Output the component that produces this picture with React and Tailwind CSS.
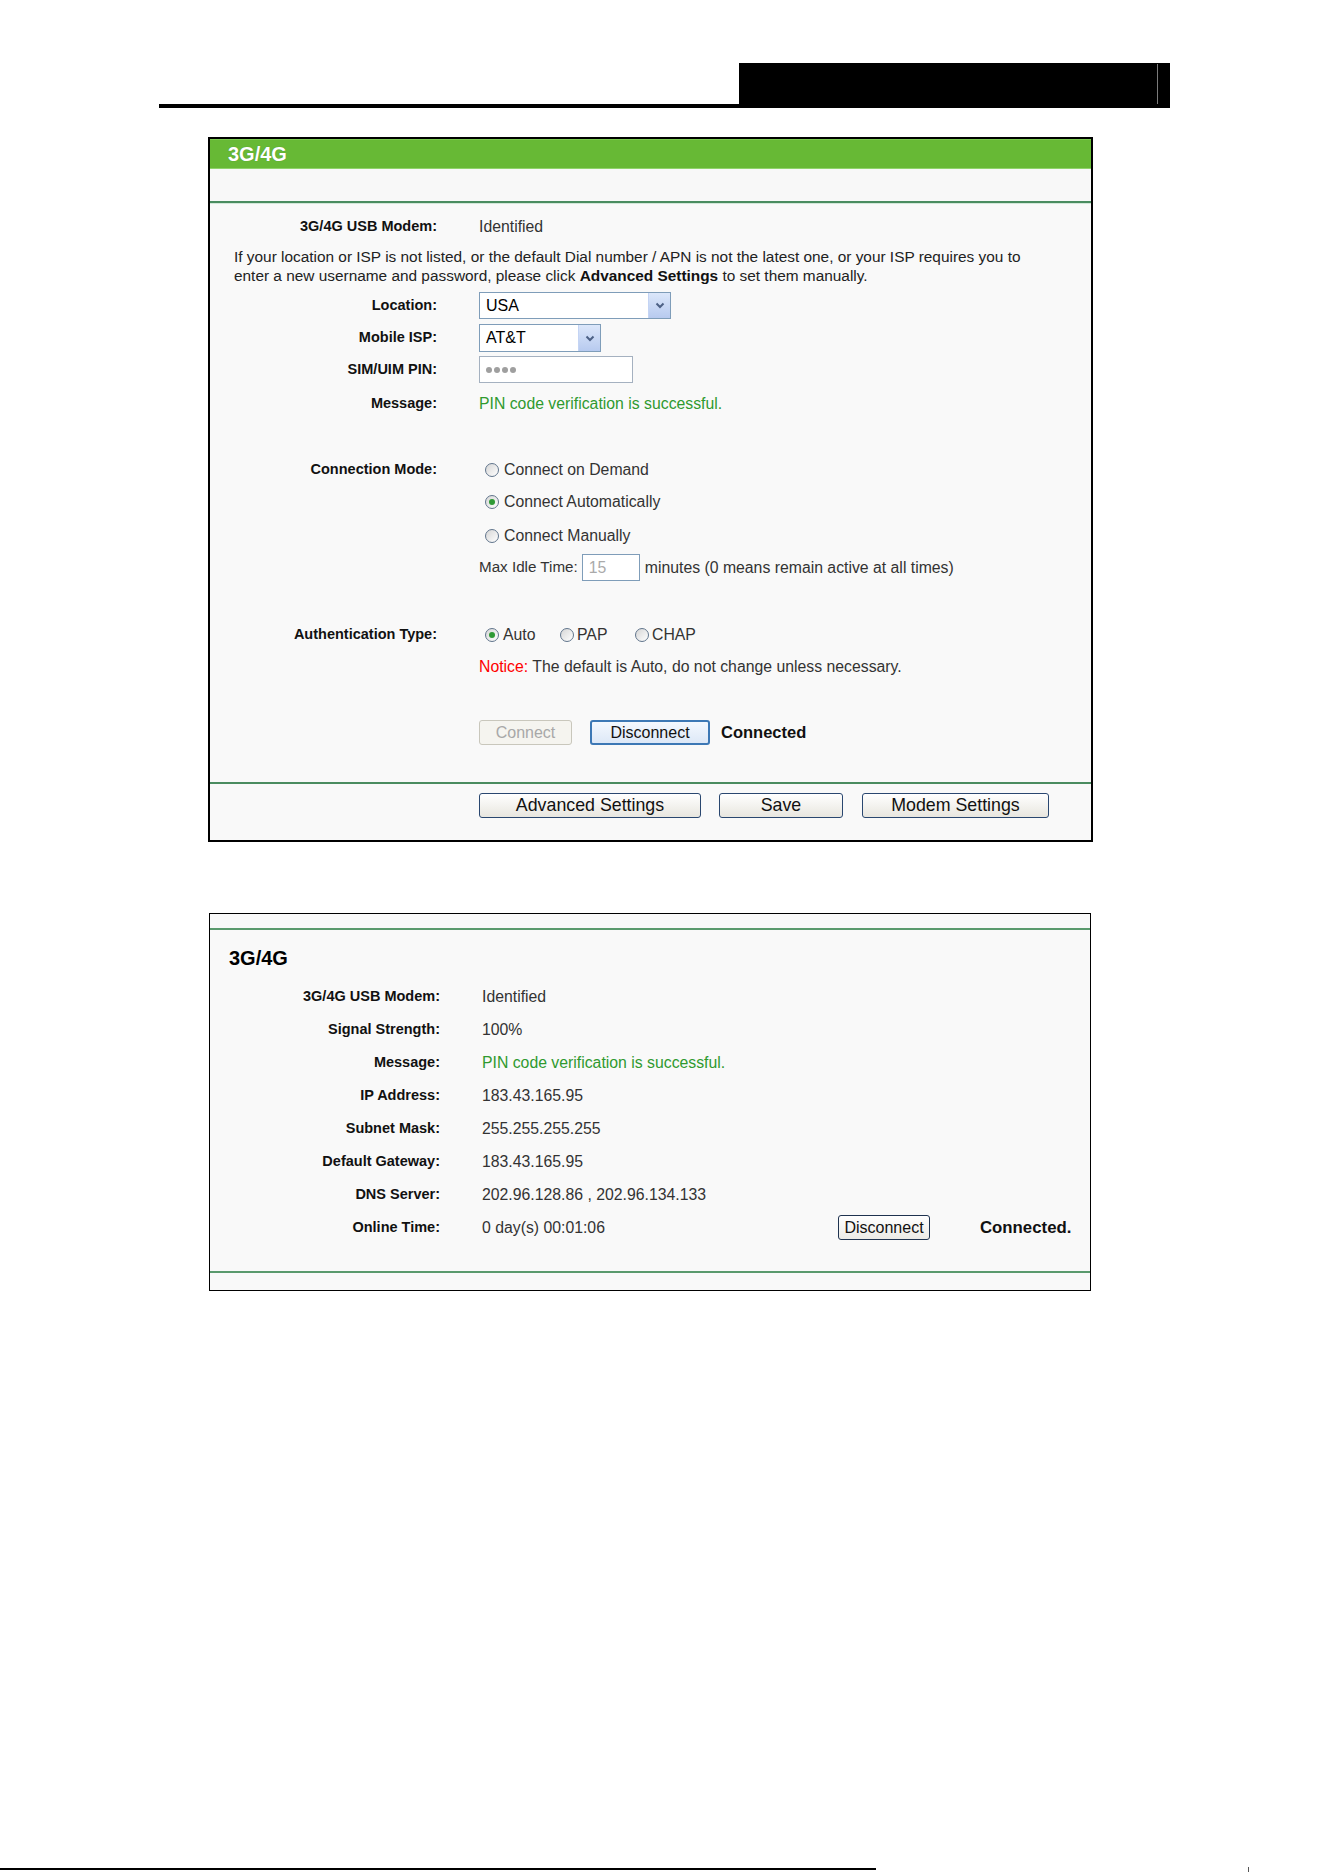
import React from "react";

const Radio = ({ checked, className = "" }) => (
  <span className={`flex w-[14px] h-[14px] shrink-0 rounded-full border border-[#61758c] bg-linear-to-br from-[#d6d6d6] to-white items-center justify-center ${className}`}>
    {checked && <span className="block w-[6px] h-[6px] rounded-full bg-[#2f9a35]" />}
  </span>
);

const Chevron = () => (
  <svg width="10" height="7" viewBox="0 0 10 7">
    <polyline points="1.5,1.5 5,5 8.5,1.5" fill="none" stroke="#4d6185" strokeWidth="2" />
  </svg>
);

const Select = ({ value, w }) => (
  <div className={`flex h-full ${w} border border-[#7f9db9] bg-white`}>
    <span className="flex-1 pl-[6px] text-[16px] leading-[25px] text-black">{value}</span>
    <span className="w-[22px] h-full bg-linear-to-b from-[#dce7fa] to-[#b7caef] border-l border-[#c4d4f4] flex items-center justify-center">
      <Chevron />
    </span>
  </div>
);

const Row = ({ label, h = "h-[20px]", lw = "w-[227px]", className = "", children }) => (
  <div className={`flex items-center ${h} ${className}`}>
    <div className={`${lw} shrink-0 text-right font-bold text-[14.5px] text-[#111]`}>{label}</div>
    <div className="ml-[42px] flex items-center h-full text-[15.8px] text-[#333]">{children}</div>
  </div>
);

const Btn = ({ children, w, className = "" }) => (
  <button
    className={`${w} h-full rounded-[3px] border border-[#2a4770] bg-linear-to-b from-white to-[#e8e6df] text-[#111] leading-none ${className}`}
  >
    {children}
  </button>
);

export default function App() {
  return (
    <div className="relative flex flex-col w-[1324px] h-[1872px] bg-white font-['Liberation_Sans',Arial,sans-serif] overflow-hidden">
      {/* Top header */}
      <div className="ml-[159px] mt-[63px] w-[1011px] h-[45px] flex items-end">
        <div className="w-[580px] h-[4px] bg-black" />
        <div className="relative w-[431px] h-[45px] bg-black">
          <div className="absolute right-[12px] top-[1px] h-[40px] w-px bg-[#7a7a7a]" />
        </div>
      </div>

      {/* Panel 1 */}
      <div className="ml-[208px] mt-[29px] w-[885px] border-2 border-black bg-[#f9f9f9] flex flex-col">
        <div className="h-[30px] bg-[#67b935] border-t border-[#7ccb4f] border-b border-b-[#8fd36a] flex items-center pl-[18px]">
          <span className="text-white font-bold text-[20px] leading-none [text-shadow:0_0_1px_rgba(0,0,0,0.25)]">3G/4G</span>
        </div>
        <div className="h-[32px] bg-[#f8f8f8]" />
        <div className="h-[2px] bg-[#4a8c60]" />
        <div className="h-px bg-[#d2e8d9]" />

        <div className="pt-[13px] pb-[22px] flex flex-col">
          <Row label="3G/4G USB Modem:">Identified</Row>
          <p className="mt-[10px] pl-[24px] text-[15.4px] leading-[19px] text-[#222]">
            If your location or ISP is not listed, or the default Dial number / APN is not the latest one, or your ISP requires you to
            <br />
            enter a new username and password, please click <b className="text-[#111]">Advanced Settings</b> to set them manually.
          </p>
          <Row label="Location:" h="h-[27px]" className="mt-[7px]">
            <Select value="USA" w="w-[192px]" />
          </Row>
          <Row label="Mobile ISP:" h="h-[28px]" className="mt-[5px]">
            <Select value="AT&T" w="w-[122px]" />
          </Row>
          <Row label="SIM/UIM PIN:" h="h-[27px]" className="mt-[4px]">
            <div className="w-[154px] h-full border border-[#a5b1c0] bg-white flex items-center pl-[6px] gap-[2px]">
              {[0, 1, 2, 3].map((i) => (
                <span key={i} className="block w-[6px] h-[6px] rounded-full bg-[#9f9f9f]" />
              ))}
            </div>
          </Row>
          <Row label="Message:" className="mt-[11px]">
            <span className="text-[#2f9a2f]">PIN code verification is successful.</span>
          </Row>

          <Row label="Connection Mode:" className="mt-[46px]">
            <Radio className="ml-[6px]" />
            <span className="ml-[5px]">Connect on Demand</span>
          </Row>
          <Row label="" className="mt-[12px]">
            <Radio checked className="ml-[6px]" />
            <span className="ml-[5px]">Connect Automatically</span>
          </Row>
          <Row label="" className="mt-[14px]">
            <Radio className="ml-[6px]" />
            <span className="ml-[5px]">Connect Manually</span>
          </Row>
          <Row label="" h="h-[27px]" className="mt-[8px]">
            <span className="text-[15.2px]">Max Idle Time:</span>
            <div className="ml-[4px] w-[58px] h-full border border-[#7f9db9] bg-white flex items-center pl-[6px] text-[#aaa]">15</div>
            <span className="ml-[5px]">minutes (0 means remain active at all times)</span>
          </Row>

          <Row label="Authentication Type:" className="mt-[44px]">
            <Radio checked className="ml-[6px]" />
            <span className="ml-[4px] w-[57px]">Auto</span>
            <Radio />
            <span className="ml-[3px] w-[58px]">PAP</span>
            <Radio />
            <span className="ml-[3px]">CHAP</span>
          </Row>
          <Row label="" className="mt-[12px]">
            <span><span className="text-[#ff0000]">Notice:</span> The default is Auto, do not change unless necessary.</span>
          </Row>

          <Row label="" h="h-[25px]" className="mt-[43px]">
            <button className="w-[93px] h-full rounded-[3px] border border-[#c9c7bc] bg-[#f5f4ef] text-[#a8a8a8] text-[16px] leading-none">Connect</button>
            <button className="ml-[18px] w-[120px] h-full rounded-[3px] border-2 border-[#3d78b5] bg-linear-to-b from-[#f4f8fe] to-[#dde8f7] text-[#111] text-[16px] leading-none">Disconnect</button>
            <span className="ml-[11px] font-bold text-[16.5px] text-[#111]">Connected</span>
          </Row>

          <div className="mt-[37px] h-[2px] bg-[#4a8c60]" />

          <Row label="" h="h-[25px]" className="mt-[9px]">
            <Btn w="w-[222px]" className="text-[17.8px]">Advanced Settings</Btn>
            <Btn w="w-[124px] ml-[18px]" className="text-[17.8px]">Save</Btn>
            <Btn w="w-[187px] ml-[19px]" className="text-[17.8px]">Modem Settings</Btn>
          </Row>
        </div>
      </div>

      {/* Panel 2 */}
      <div className="ml-[209px] mt-[71px] w-[882px] border border-black bg-[#f9f9f9] flex flex-col">
        <div className="h-[14px]" />
        <div className="h-[2px] bg-[#5a9a6d]" />
        <div className="mt-[16px] h-[24px] flex items-center pl-[19px]">
          <span className="font-bold text-[20px] text-black leading-none">3G/4G</span>
        </div>
        <div className="mt-[10px] flex flex-col">
          {[
            ["3G/4G USB Modem:", "Identified"],
            ["Signal Strength:", "100%"],
            ["Message:", <span className="text-[#2f9a2f]">PIN code verification is successful.</span>],
            ["IP Address:", "183.43.165.95"],
            ["Subnet Mask:", "255.255.255.255"],
            ["Default Gateway:", "183.43.165.95"],
            ["DNS Server:", "202.96.128.86 , 202.96.134.133"],
          ].map(([l, v], i) => (
            <Row key={i} label={l} h="h-[33px]" lw="w-[230px]">
              {v}
            </Row>
          ))}
          <Row label="Online Time:" h="h-[33px]" lw="w-[230px]">
            <span className="w-[356px]">0 day(s) 00:01:06</span>
            <div className="h-[25px] flex">
              <button className="w-[92px] h-full rounded-[3px] border border-[#1f3350] bg-linear-to-b from-white to-[#ecebe6] text-[#111] text-[16px] leading-none">Disconnect</button>
            </div>
            <span className="ml-[50px] font-bold text-[16.8px] text-[#111]">Connected.</span>
          </Row>
        </div>
        <div className="mt-[27px] h-[2px] bg-[#5a9a6d]" />
        <div className="h-[17px]" />
      </div>

      {/* Footer */}
      <div className="mt-auto h-[6px] flex items-end">
        <div className="mb-[2px] w-[876px] h-[2px] bg-black" />
        <div className="ml-[372px] w-px h-[5px] bg-[#555]" />
      </div>
    </div>
  );
}
